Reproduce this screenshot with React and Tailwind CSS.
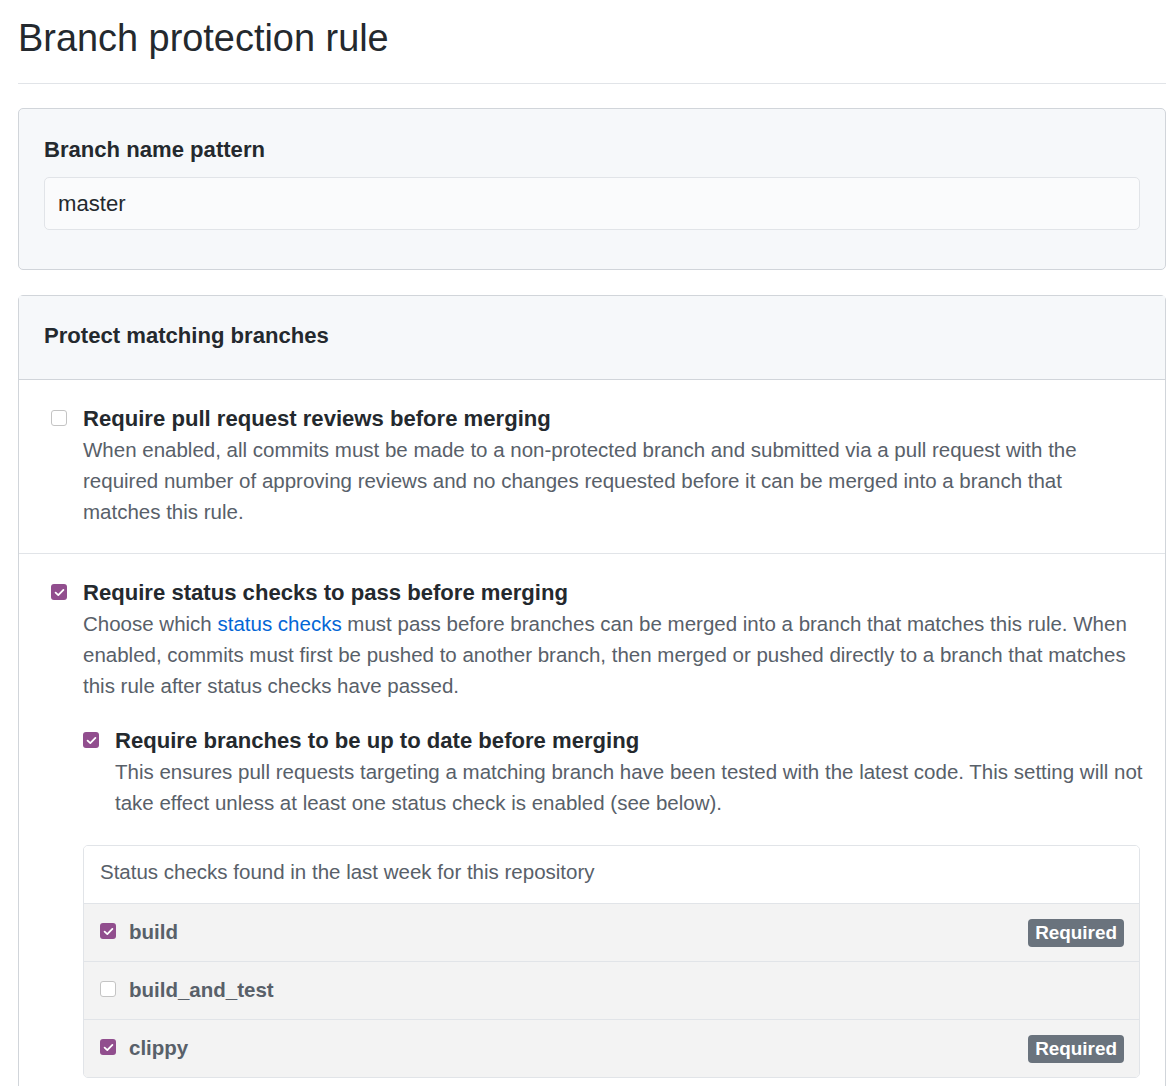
import React from "react";

function Check({ checked }) {
  return checked ? (
    <span className="flex h-4 w-4 shrink-0 items-center justify-center rounded-[3px] bg-[#914e8e]">
      <svg width="11" height="9" viewBox="0 0 11 9">
        <path d="M1.6 4.6 L4.3 7.1 L9.4 1.9" stroke="white" strokeWidth="1.8" fill="none" strokeLinecap="round" strokeLinejoin="round" />
      </svg>
    </span>
  ) : (
    <span className="block h-4 w-4 shrink-0 rounded-[3px] border border-[#c4c4c4] bg-white" />
  );
}

function StatusRow({ name, checked, required }) {
  return (
    <div className="flex h-[58px] items-center justify-between border-t border-[#e1e4e8] bg-[#f3f3f3] pl-[16px] pr-[15px]">
      <div className="mb-[3px] flex items-center gap-[13px]">
        <Check checked={checked} />
        <span className="text-[20.5px] font-bold leading-[31px] text-[#586069]">{name}</span>
      </div>
      {required && (
        <span className="rounded-[4px] bg-[#6a737d] px-[7px] text-[18.9px] font-bold leading-[28px] text-white">
          Required
        </span>
      )}
    </div>
  );
}

export default function App() {
  return (
    <div className="min-h-[1086px] bg-white pl-[18px] font-['Liberation_Sans',Arial,sans-serif] text-[#24292e]">
      <div className="w-[1148px]">
        <h1 className="border-b border-[#e1e4e8] pt-[15px] pb-[21px] text-[37.9px] font-normal leading-[47px]">
          Branch protection rule
        </h1>

        <div className="mt-[24px] rounded-[5px] border border-[#d1d5da] bg-[#f6f8fa] px-[25px] pt-[24px] pb-[39px]">
          <div className="mb-[11px] text-[22.1px] font-bold leading-[33px]">Branch name pattern</div>
          <div className="flex h-[53px] items-center rounded-[5px] border border-[#e1e4e8] bg-[#fafbfc] px-[13px] text-[22.1px]">
            master
          </div>
        </div>

        <div className="mt-[25px] rounded-t-[5px] border border-[#d1d5da]">
          <div className="border-b border-[#d1d5da] bg-[#f6f8fa] px-[25px] pt-[23px] pb-[27px] text-[22.1px] font-bold leading-[33px]">
            Protect matching branches
          </div>

          <div className="flex border-b border-[#e1e4e8] px-[25px] pt-[23px] pb-[26px]">
            <div className="w-[39px] shrink-0 pl-[7px] pt-[7px]">
              <Check checked={false} />
            </div>
            <div className="flex-1">
              <div className="text-[22.1px] font-bold leading-[31px]">Require pull request reviews before merging</div>
              <p className="text-[20.5px] leading-[31px] text-[#586069]">
                When enabled, all commits must be made to a non-protected branch and submitted via a pull request with the required number of approving reviews and no changes requested before it can be merged into a branch that matches this rule.
              </p>
            </div>
          </div>

          <div className="flex px-[25px] pt-[23px] pb-[60px]">
            <div className="w-[39px] shrink-0 pl-[7px] pt-[7px]">
              <Check checked={true} />
            </div>
            <div className="flex-1">
              <div className="text-[22.1px] font-bold leading-[31px]">Require status checks to pass before merging</div>
              <p className="text-[20.5px] leading-[31px] text-[#586069]">
                Choose which <a className="text-[#0366d6]">status checks</a> must pass before branches can be merged into a branch that matches this rule. When enabled, commits must first be pushed to another branch, then merged or pushed directly to a branch that matches this rule after status checks have passed.
              </p>

              <div className="mt-[24px] flex">
                <div className="w-[32px] shrink-0 pt-[7px]">
                  <Check checked={true} />
                </div>
                <div className="mr-[-8px] flex-1">
                  <div className="text-[22.1px] font-bold leading-[31px]">Require branches to be up to date before merging</div>
                  <p className="text-[20.5px] leading-[31px] text-[#586069]">
                    This ensures pull requests targeting a matching branch have been tested with the latest code. This setting will not take effect unless at least one status check is enabled (see below).
                  </p>
                </div>
              </div>

              <div className="mt-[27px] overflow-hidden rounded-[5px] border border-[#e1e4e8]">
                <div className="bg-white pl-[16px] pt-[10px] pb-[16px] text-[20.5px] leading-[31px] text-[#586069]">
                  Status checks found in the last week for this repository
                </div>
                <StatusRow name="build" checked={true} required={true} />
                <StatusRow name="build_and_test" checked={false} required={false} />
                <StatusRow name="clippy" checked={true} required={true} />
              </div>
            </div>
          </div>
        </div>
      </div>
    </div>
  );
}
